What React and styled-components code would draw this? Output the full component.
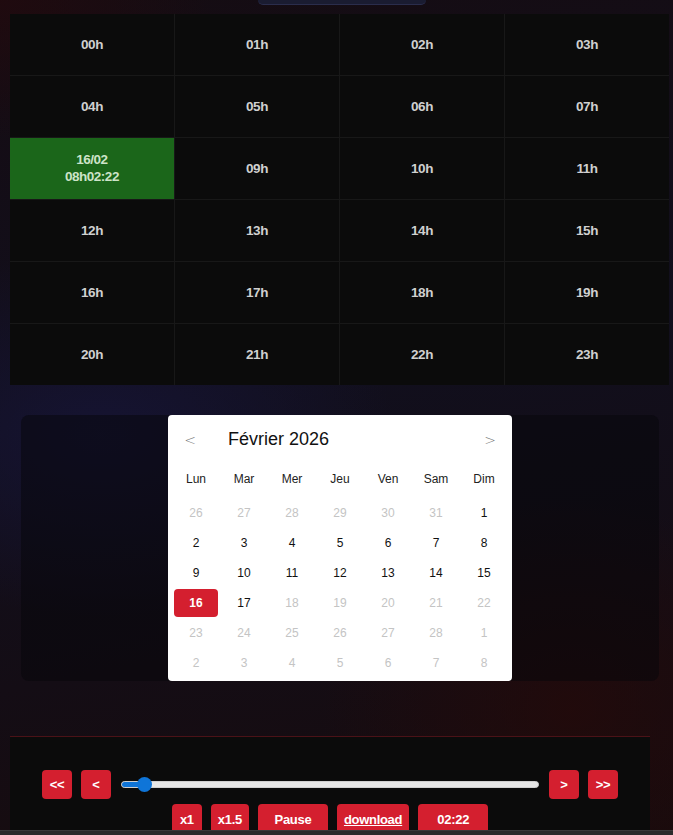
import React from 'react'
import styled, { createGlobalStyle } from 'styled-components'

const GlobalStyle = createGlobalStyle`
  html, body {
    margin: 0;
    padding: 0;
  }
  body {
    min-height: 835px;
    overflow: hidden;
    font-family: "Liberation Sans", Arial, sans-serif;
    background:
      radial-gradient(ellipse 420px 260px at 15% 52%, rgba(22, 20, 52, 0.9), transparent 70%),
      radial-gradient(ellipse 360px 300px at 85% 85%, rgba(36, 10, 10, 0.8), transparent 70%),
      radial-gradient(ellipse 300px 200px at 0% 0%, rgba(34, 10, 14, 0.8), transparent 70%),
      linear-gradient(170deg, #150c12 0%, #110f1d 45%, #170b0d 100%);
  }
`

const Page = styled.div`
  width: 673px;
  height: 835px;
  display: flex;
  flex-direction: column;
`

const TopStrip = styled.div`
  height: 14px;
  padding-left: 258px;
`

const Tab = styled.div`
  width: 168px;
  height: 4px;
  background: #1a1c31;
  border-bottom: 1px solid #2a2d4c;
  border-radius: 0 0 8px 8px;
`

const HourGrid = styled.div`
  margin-left: 10px;
  width: 659px;
  display: grid;
  grid-template-columns: repeat(4, 1fr);
  grid-auto-rows: 61px;
  gap: 1px;
  background: #181818;
`

const HourCell = styled.div`
  display: flex;
  flex-direction: column;
  align-items: center;
  justify-content: center;
  background: ${p => (p.$active ? '#1b661a' : '#0b0b0b')};
  color: ${p => (p.$active ? '#cde3c8' : '#d0d0d0')};
  font-weight: bold;
  font-size: 13.5px;
  letter-spacing: -0.5px;
  line-height: 17px;
`

const CalendarPanel = styled.div`
  margin: 30px 0 0 21px;
  width: 638px;
  height: 267px;
  border-radius: 8px;
  background: rgba(6, 6, 10, 0.5);
  display: flex;
  justify-content: center;
`

const Calendar = styled.div`
  width: 344px;
  height: 266px;
  box-sizing: border-box;
  padding: 0 4px 3px;
  background: #ffffff;
  border-radius: 4px;
  display: flex;
  flex-direction: column;
`

const CalHeader = styled.div`
  height: 50px;
  display: flex;
  align-items: center;
  padding: 0 6px;
`

const NavButton = styled.span`
  width: 24px;
  text-align: center;
  color: #7a7a7a;
  font-size: 14px;
  font-family: "DejaVu Sans", sans-serif;
  font-weight: 200;
`

const Title = styled.div`
  flex: 1;
  margin-left: 26px;
  font-size: 18px;
  color: #111;
`

const WeekRow = styled.div`
  display: grid;
  grid-template-columns: repeat(7, 48px);
  height: 29px;
  align-items: center;
  margin-bottom: 4px;
`

const WeekDay = styled.div`
  text-align: center;
  font-size: 12px;
  color: #222;
`

const DaysGrid = styled.div`
  display: grid;
  grid-template-columns: repeat(7, 48px);
  grid-auto-rows: 30px;
`

const Day = styled.div`
  display: flex;
  align-items: center;
  justify-content: center;
  margin: 1px 2px;
  border-radius: 4px;
  font-size: 12px;
  background: ${p => (p.$selected ? '#d41f2f' : 'transparent')};
  color: ${p => (p.$selected ? '#fff' : p.$muted ? '#c4c4c4' : '#111')};
  font-weight: ${p => (p.$selected ? 'bold' : 'normal')};
`

const Player = styled.div`
  margin: 55px 0 0 10px;
  width: 640px;
  height: 94px;
  box-sizing: border-box;
  padding-top: 33px;
  background: #0b0b0b;
  border-top: 1px solid #4b1217;
  overflow: hidden;
  display: flex;
  flex-direction: column;
  align-items: center;
  gap: 5px;
`

const Controls = styled.div`
  display: flex;
  align-items: center;
  gap: 9px;
`

const Button = styled.button`
  min-width: ${p => p.$wide ? '70px' : '30px'};
  height: ${p => p.$tall ? '31px' : '29px'};
  padding: 0 7px;
  border: none;
  border-radius: 4px;
  background: #d41f2f;
  color: #fff;
  font-family: "Liberation Sans", Arial, sans-serif;
  font-weight: bold;
  font-size: 13px;
  letter-spacing: -0.3px;
  text-decoration: ${p => (p.$link ? 'underline' : 'none')};
  flex-shrink: 0;
`

const Slider = styled.div`
  position: relative;
  width: 418px;
  height: 7px;
  margin: 0 1px;
  border-radius: 4px;
  background: #e6e6e6;
  border: 1px solid #cfcfcf;
  box-sizing: border-box;
`

const SliderFill = styled.div`
  height: 100%;
  border-radius: 4px;
  background: #0f75d8;
`

const Thumb = styled.div`
  position: absolute;
  top: 50%;
  width: 15px;
  height: 15px;
  margin: -7.5px 0 0 -7.5px;
  border-radius: 50%;
  background: #0f75d8;
`

const BottomBar = styled.div`
  height: 4px;
  background: #2b2b2b;
  border-top: 1px solid #3a3a3a;
`

const hours = Array.from({ length: 24 }, (_, i) => String(i).padStart(2, '0') + 'h')

const weekDays = ['Lun', 'Mar', 'Mer', 'Jeu', 'Ven', 'Sam', 'Dim']

const days = [
  [26, 1], [27, 1], [28, 1], [29, 1], [30, 1], [31, 1], [1, 0],
  [2, 0], [3, 0], [4, 0], [5, 0], [6, 0], [7, 0], [8, 0],
  [9, 0], [10, 0], [11, 0], [12, 0], [13, 0], [14, 0], [15, 0],
  [16, 0], [17, 0], [18, 1], [19, 1], [20, 1], [21, 1], [22, 1],
  [23, 1], [24, 1], [25, 1], [26, 1], [27, 1], [28, 1], [1, 1],
  [2, 1], [3, 1], [4, 1], [5, 1], [6, 1], [7, 1], [8, 1],
]

const progress = 0.055

export default function App() {
  return (
    <>
      <GlobalStyle />
      <Page>
        <TopStrip>
          <Tab />
        </TopStrip>
        <HourGrid>
          {hours.map((h, i) =>
            i === 8 ? (
              <HourCell key={h} $active>
                <span>16/02</span>
                <span>08h02:22</span>
              </HourCell>
            ) : (
              <HourCell key={h}>{h}</HourCell>
            )
          )}
        </HourGrid>

        <CalendarPanel>
          <Calendar>
            <CalHeader>
              <NavButton>&lt;</NavButton>
              <Title>Février 2026</Title>
              <NavButton>&gt;</NavButton>
            </CalHeader>
            <WeekRow>
              {weekDays.map(d => <WeekDay key={d}>{d}</WeekDay>)}
            </WeekRow>
            <DaysGrid>
              {days.map(([n, muted], i) => (
                <Day key={i} $muted={muted} $selected={i === 21}>{n}</Day>
              ))}
            </DaysGrid>
          </Calendar>
        </CalendarPanel>

        <Player>
          <Controls>
            <Button>&lt;&lt;</Button>
            <Button>&lt;</Button>
            <Slider>
              <SliderFill style={{ width: `${progress * 100}%` }} />
              <Thumb style={{ left: `${progress * 100}%` }} />
            </Slider>
            <Button>&gt;</Button>
            <Button>&gt;&gt;</Button>
          </Controls>
          <Controls>
            <Button $tall>x1</Button>
            <Button $tall>x1.5</Button>
            <Button $tall $wide>Pause</Button>
            <Button $tall $wide $link>download</Button>
            <Button $tall $wide>02:22</Button>
          </Controls>
        </Player>
        <BottomBar />
      </Page>
    </>
  )
}
